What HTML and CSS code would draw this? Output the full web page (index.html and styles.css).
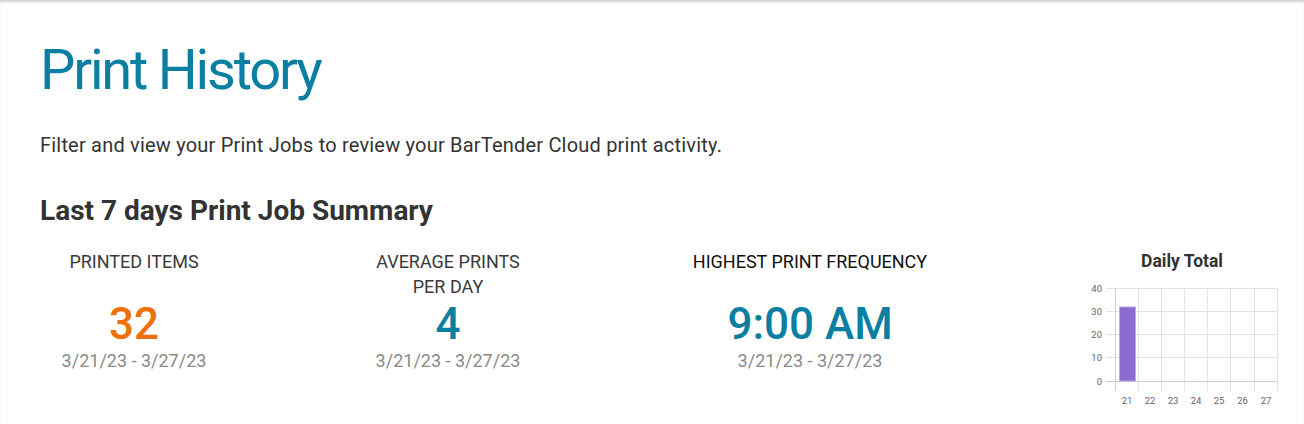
FILE: index.html
```html
<!DOCTYPE html>
<html lang="en">
<head>
<meta charset="utf-8">
<title>Print History</title>
<link rel="stylesheet" href="styles.css">
</head>
<body>
<main class="page">
  <h1 class="title">Print History</h1>
  <p class="intro">Filter and view your Print Jobs to review your BarTender Cloud print activity.</p>
  <h2 class="summary-heading">Last 7 days Print Job Summary</h2>
  <section class="stats">
    <div class="stat">
      <div class="stat-label">PRINTED ITEMS</div>
      <div class="stat-value orange">32</div>
      <div class="stat-range">3/21/23 - 3/27/23</div>
    </div>
    <div class="stat">
      <div class="stat-label narrow">AVERAGE PRINTS PER DAY</div>
      <div class="stat-value teal">4</div>
      <div class="stat-range">3/21/23 - 3/27/23</div>
    </div>
    <div class="stat">
      <div class="stat-label dark">HIGHEST PRINT FREQUENCY</div>
      <div class="stat-value teal">9:00 AM</div>
      <div class="stat-range">3/21/23 - 3/27/23</div>
    </div>
    <div class="chart">
      <div class="chart-title">Daily Total</div>
      <svg class="chart-svg" width="220" height="140" viewBox="0 0 220 140">
        <g class="grid">
          <line x1="34" y1="14.5" x2="205.5" y2="14.5"/>
          <line x1="34" y1="37.5" x2="205.5" y2="37.5"/>
          <line x1="34" y1="60.5" x2="205.5" y2="60.5"/>
          <line x1="34" y1="83.5" x2="205.5" y2="83.5"/>
          <line x1="66.5" y1="14.5" x2="66.5" y2="117"/>
          <line x1="89.5" y1="14.5" x2="89.5" y2="117"/>
          <line x1="112.5" y1="14.5" x2="112.5" y2="117"/>
          <line x1="135.5" y1="14.5" x2="135.5" y2="117"/>
          <line x1="158.5" y1="14.5" x2="158.5" y2="117"/>
          <line x1="182.5" y1="14.5" x2="182.5" y2="117"/>
          <line x1="205.5" y1="14.5" x2="205.5" y2="117"/>
        </g>
        <g class="axis">
          <line x1="43.5" y1="14.5" x2="43.5" y2="117"/>
          <line x1="34" y1="107.5" x2="205.5" y2="107.5"/>
        </g>
        <rect class="bar" x="47.5" y="33" width="16" height="74"/>
        <g class="ylabels">
          <text x="30" y="17.5">40</text>
          <text x="30" y="40.5">30</text>
          <text x="30" y="63.5">20</text>
          <text x="30" y="86.5">10</text>
          <text x="30" y="110.5">0</text>
        </g>
        <g class="xlabels">
          <text x="55" y="130">21</text>
          <text x="78" y="130">22</text>
          <text x="101" y="130">23</text>
          <text x="124" y="130">24</text>
          <text x="147" y="130">25</text>
          <text x="170.5" y="130">26</text>
          <text x="194" y="130">27</text>
        </g>
      </svg>
    </div>
  </section>
</main>
</body>
</html>
```

FILE: styles.css
```css
* { box-sizing: border-box; }

html, body {
  margin: 0;
  padding: 0;
  background: #ffffff;
}

body {
  font-family: Roboto, "Liberation Sans", Arial, sans-serif;
  color: #333333;
  box-shadow: inset 0 3px 3px -1px rgba(0, 0, 0, 0.18);
  min-height: 424px;
}

.page {
  padding: 37px 40px 0 40px;
}

.title {
  margin: 0;
  font-size: 56px;
  line-height: 67px;
  font-weight: 400;
  letter-spacing: -2.2px;
  color: #0a7fa1;
}

.intro {
  margin: 27px 0 0 0;
  font-size: 20px;
  line-height: 28px;
  letter-spacing: 0.2px;
  color: #333333;
}

.summary-heading {
  margin: 35px 0 0 0;
  font-size: 28px;
  line-height: 34px;
  font-weight: 700;
  color: #333333;
}

.stats {
  margin-top: 21px;
  display: grid;
  grid-template-columns: 188px 200px 284px 220px;
  column-gap: 120px;
  align-items: start;
}

.stat {
  display: flex;
  flex-direction: column;
  align-items: center;
  text-align: center;
}

.stat-label {
  font-size: 18px;
  line-height: 25px;
  height: 50px;
  color: #3a3a3a;
}

.stat-label.narrow {
  max-width: 170px;
}

.stat-label.dark {
  color: #111111;
}

.stat-value {
  margin-top: 1px;
  font-size: 44px;
  line-height: 48px;
  font-weight: 500;
}

.stat-value.orange { color: #ee7008; }
.stat-value.teal { color: #0a7fa1; }

.stat-range {
  margin-top: 2px;
  font-size: 18px;
  line-height: 22px;
  color: #8a8a8a;
}

.chart {
  display: flex;
  flex-direction: column;
}

.chart-title {
  font-size: 17.5px;
  line-height: 25px;
  font-weight: 700;
  color: #333333;
  text-align: center;
}

.chart-svg {
  display: block;
}

.grid line {
  stroke: #e3e3e3;
  stroke-width: 1;
}

.axis line {
  stroke: #cfcfcf;
  stroke-width: 1;
}

.bar {
  fill: #8a6bcf;
  stroke: #b9a8e3;
  stroke-width: 1;
}

.ylabels text,
.xlabels text {
  font-family: Roboto, "Liberation Sans", Arial, sans-serif;
  font-size: 9.5px;
  fill: #666666;
}

.ylabels text { text-anchor: end; }
.xlabels text { text-anchor: middle; }
```
